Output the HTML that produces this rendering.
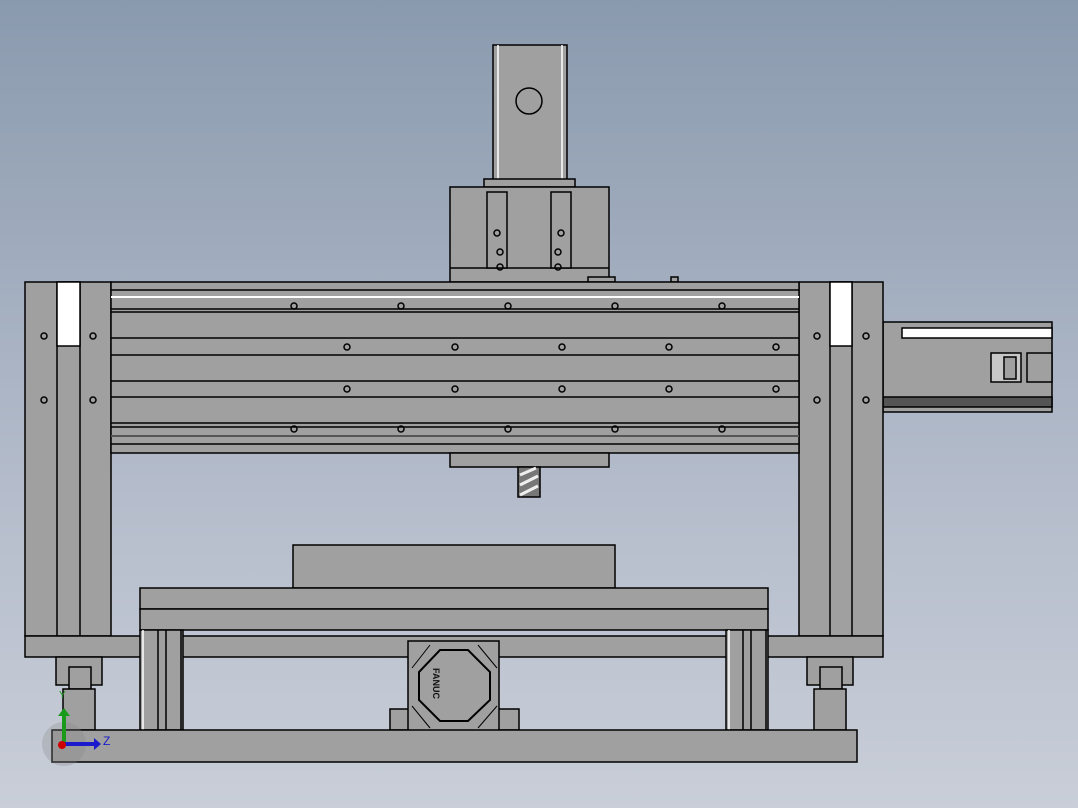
<!DOCTYPE html>
<html><head><style>
html,body{margin:0;padding:0;width:1078px;height:808px;overflow:hidden}
body{background:linear-gradient(#8a9aae,#b4bccb 60%,#c9ced8)}
svg{display:block}
</style></head><body>
<svg width="1078" height="808" viewBox="0 0 1078 808" xmlns="http://www.w3.org/2000/svg">
<g fill="#a0a0a0" stroke="#000" stroke-width="1.5">
<!-- top motor -->
<rect x="493" y="45" width="74" height="135"/>
<line x1="498" y1="45" x2="498" y2="180" stroke="#fff"/>
<line x1="562" y1="45" x2="562" y2="180" stroke="#fff"/>
<circle cx="529" cy="101" r="13"/>
<rect x="484" y="179" width="91" height="8"/>
<!-- carriage -->
<rect x="450" y="187" width="159" height="95"/>
<line x1="450" y1="268" x2="609" y2="268"/>
<rect x="487" y="192" width="20" height="76"/>
<rect x="551" y="192" width="20" height="76"/>
<rect x="588" y="277" width="27" height="5"/>
<rect x="671" y="277" width="7" height="5"/>
<!-- right motor -->
<rect x="883" y="322" width="169" height="90"/>
<rect x="902" y="328" width="150" height="10" fill="#fff"/>
<rect x="883" y="397" width="169" height="10" fill="#555"/>
<rect x="991" y="353" width="30" height="29" fill="#c8c8c8"/>
<rect x="1004" y="357" width="12" height="22"/>
<rect x="1027" y="353" width="25" height="29"/>
<!-- frame legs -->
<rect x="25" y="282" width="86" height="354"/>
<rect x="57" y="282" width="23" height="354"/>
<rect x="57" y="282" width="23" height="64" fill="#fff"/>
<rect x="799" y="282" width="84" height="354"/>
<rect x="830" y="282" width="22" height="354"/>
<rect x="830" y="282" width="22" height="64" fill="#fff"/>
<!-- beam -->
<rect x="111" y="282" width="688" height="171"/>
</g>
<g stroke="#000" stroke-width="1.5">
<line x1="111" y1="290" x2="799" y2="290"/>
<line x1="111" y1="297" x2="799" y2="297" stroke="#fff" stroke-width="2"/>
<line x1="111" y1="309" x2="799" y2="309"/>
<line x1="111" y1="312" x2="799" y2="312"/>
<line x1="111" y1="338" x2="799" y2="338"/>
<line x1="111" y1="355" x2="799" y2="355"/>
<line x1="111" y1="381" x2="799" y2="381"/>
<line x1="111" y1="397" x2="799" y2="397"/>
<line x1="111" y1="423" x2="799" y2="423"/>
<line x1="111" y1="427" x2="799" y2="427"/>
<line x1="111" y1="436" x2="799" y2="436" stroke="#555" stroke-width="2"/>
<line x1="111" y1="444" x2="799" y2="444"/>
</g>
<g fill="none" stroke="#000" stroke-width="1.5">
<circle cx="44" cy="336" r="3"/><circle cx="93" cy="336" r="3"/>
<circle cx="44" cy="400" r="3"/><circle cx="93" cy="400" r="3"/>
<circle cx="817" cy="336" r="3"/><circle cx="866" cy="336" r="3"/>
<circle cx="817" cy="400" r="3"/><circle cx="866" cy="400" r="3"/>
<circle cx="294" cy="306" r="3"/><circle cx="401" cy="306" r="3"/><circle cx="508" cy="306" r="3"/><circle cx="615" cy="306" r="3"/><circle cx="722" cy="306" r="3"/>
<circle cx="347" cy="347" r="3"/><circle cx="455" cy="347" r="3"/><circle cx="562" cy="347" r="3"/><circle cx="669" cy="347" r="3"/><circle cx="776" cy="347" r="3"/>
<circle cx="347" cy="389" r="3"/><circle cx="455" cy="389" r="3"/><circle cx="562" cy="389" r="3"/><circle cx="669" cy="389" r="3"/><circle cx="776" cy="389" r="3"/>
<circle cx="294" cy="429" r="3"/><circle cx="401" cy="429" r="3"/><circle cx="508" cy="429" r="3"/><circle cx="615" cy="429" r="3"/><circle cx="722" cy="429" r="3"/>
<circle cx="497" cy="233" r="3"/><circle cx="500" cy="252" r="3"/><circle cx="500" cy="267" r="3"/>
<circle cx="561" cy="233" r="3"/><circle cx="558" cy="252" r="3"/><circle cx="558" cy="267" r="3"/>
</g>
<g fill="#a0a0a0" stroke="#000" stroke-width="1.5">
<!-- lower carriage + tool -->
<rect x="450" y="453" width="159" height="14"/>
<rect x="518" y="467" width="22" height="30" fill="#777"/>
<path d="M520 475 L536 468 M520 485 L538 476 M520 495 L538 486" stroke="#eee" stroke-width="3"/>
<!-- work block & table -->
<rect x="293" y="545" width="322" height="43"/>
<rect x="25" y="636" width="858" height="21"/>
<rect x="140" y="588" width="628" height="21"/>
<rect x="140" y="609" width="628" height="21"/>
<rect x="140" y="630" width="43" height="100"/>
<line x1="143" y1="630" x2="143" y2="730" stroke="#fff"/>
<line x1="158" y1="630" x2="158" y2="730"/>
<line x1="166" y1="630" x2="166" y2="730"/>
<line x1="181" y1="630" x2="181" y2="730"/>
<rect x="726" y="630" width="42" height="100"/>
<line x1="729" y1="630" x2="729" y2="730" stroke="#fff"/>
<line x1="743" y1="630" x2="743" y2="730"/>
<line x1="751" y1="630" x2="751" y2="730"/>
<line x1="766" y1="630" x2="766" y2="730"/>
<!-- feet -->
<rect x="56" y="657" width="46" height="28"/>
<rect x="69" y="667" width="22" height="22"/>
<rect x="63" y="689" width="32" height="41"/>
<rect x="807" y="657" width="46" height="28"/>
<rect x="820" y="667" width="22" height="22"/>
<rect x="814" y="689" width="32" height="41"/>
<!-- octagon box -->
<rect x="390" y="709" width="129" height="21"/>
<rect x="408" y="641" width="91" height="90"/>
<path d="M440 650 L468 650 L490 672 L490 700 L468 721 L440 721 L419 700 L419 672 Z" stroke-width="2"/>
<path d="M412 668 L430 645 M478 645 L497 668 M412 706 L430 728 M478 728 L497 706" fill="none" stroke-width="1"/>
<text x="0" y="0" transform="translate(433,668) rotate(90)" font-family="Liberation Sans, sans-serif" font-size="9" font-weight="bold" fill="#111" stroke="none">FANUC</text>
<!-- base plate -->
<rect x="52" y="730" width="805" height="32"/>
</g>
<!-- triad -->
<circle cx="64" cy="744" r="22" fill="#888" opacity="0.3"/>
<line x1="64" y1="744" x2="64" y2="715" stroke="#1a9a1a" stroke-width="4"/>
<path d="M58 716 L64 708 L70 716 Z" fill="#1a9a1a"/>
<line x1="64" y1="744" x2="94" y2="744" stroke="#1a1acc" stroke-width="4"/>
<path d="M94 738 L101 744 L94 750 Z" fill="#1a1acc"/>
<circle cx="62" cy="745" r="4" fill="#c00"/>
<text x="103" y="745" font-family="Liberation Sans, sans-serif" font-size="12" fill="#1a1acc">Z</text>
<text x="59" y="698" font-family="Liberation Sans, sans-serif" font-size="10" fill="#1a9a1a">Y</text>
</svg>
</body></html>
